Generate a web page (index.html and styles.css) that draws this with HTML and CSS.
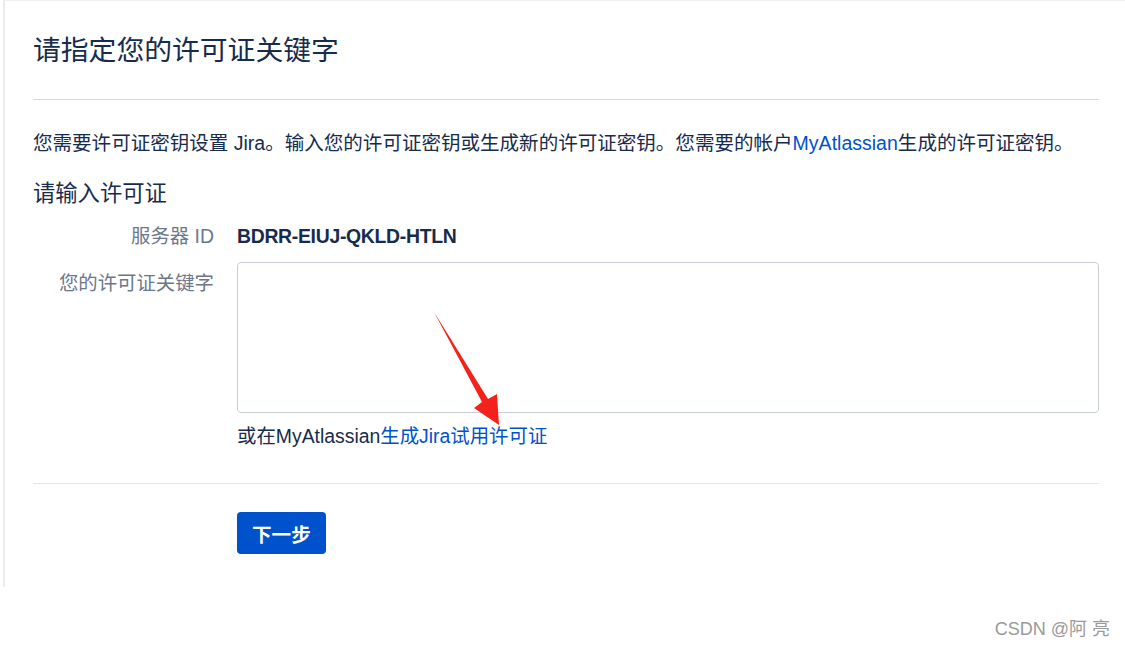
FILE: index.html
```html
<!DOCTYPE html>
<html lang="zh-CN">

<head>
    <meta charset="UTF-8">
    <title>请指定您的许可证关键字</title>
    <link rel="stylesheet" href="styles.css">
</head>

<body>
    <div class="panel">
        <div class="panel-header">
            <h1>请指定您的许可证关键字</h1>
        </div>

        <p class="intro">您需要许可证密钥设置 Jira。输入您的许可证密钥或生成新的许可证密钥。您需要的帐户<a href="#">MyAtlassian</a>生成的许可证密钥。</p>

        <h2>请输入许可证</h2>

        <div class="form-row">
            <label class="label">服务器 ID</label>
            <div class="server-id">BDRR-EIUJ-QKLD-HTLN</div>
        </div>
        <div class="form-row key-row">
            <label class="label" for="licenseKey">您的许可证关键字</label>
            <div class="field">
                <textarea id="licenseKey"></textarea>
                <div class="hint">或在MyAtlassian<a href="#">生成Jira试用许可证</a></div>
            </div>
        </div>

        <div class="panel-footer">
            <button class="btn-primary">下一步</button>
        </div>

        <!-- 标注箭头 -->
        <svg class="arrow" width="1125" height="648" viewBox="0 0 1125 648">
            <polygon points="434,312 488,399 497,394 499,425 474,408 482,402" fill="#f5221b"/>
        </svg>
    </div>

    <div class="watermark">CSDN @阿 亮</div>
</body>

</html>
```

FILE: styles.css
```css
* {
    box-sizing: border-box;
}

body {
    margin: 0;
    background-color: #fff;
    font-family: "Liberation Sans", "Noto Sans CJK SC", sans-serif;
    color: #172b4d;
}

.panel {
    position: relative;
    margin-left: 3px;
    height: 587px;
    border-left: 2px solid #ebecf0;
    border-top: 1px solid #f0f1f3;
    padding: 0 26px 0 28px;
}

.panel-header {
    padding: 30px 0 28px;
    border-bottom: 1px solid #d7dae0;
}

h1 {
    margin: 0;
    font-size: 27.8px;
    font-weight: 400;
    line-height: 40px;
}

.intro {
    margin: 29px 0 0;
    font-size: 19.55px;
    line-height: 28px;
    white-space: nowrap;
}

a {
    color: #0052cc;
    text-decoration: none;
}

h2 {
    margin: 22px 0 0;
    font-size: 22.3px;
    font-weight: 400;
    line-height: 30px;
}

.form-row {
    display: grid;
    grid-template-columns: 181px 1fr;
    column-gap: 23px;
    margin-top: 13px;
    font-size: 19.4px;
    line-height: 28px;
}

.key-row {
    margin-top: 12px;
}

.label {
    text-align: right;
    color: #6b778c;
}

.key-row .label {
    padding-top: 7px;
}

.server-id {
    font-weight: 700;
    letter-spacing: -0.3px;
}

textarea {
    display: block;
    width: 100%;
    height: 151px;
    margin: 0;
    border: 1.5px solid #c9ced6;
    border-radius: 4px;
    resize: none;
    font: inherit;
}

.hint {
    margin-top: 9px;
    white-space: nowrap;
}

.panel-footer {
    margin-top: 33px;
    padding: 28px 0 0 204px;
    border-top: 1px solid #e1e3e8;
}

.btn-primary {
    height: 42px;
    padding: 0 15px;
    border: none;
    border-radius: 4px;
    background-color: #0052cc;
    color: #fff;
    font-family: "Liberation Sans", "Noto Sans CJK SC", sans-serif;
    font-size: 19.6px;
    font-weight: 700;
    cursor: pointer;
}

.arrow {
    position: absolute;
    top: -1px;
    left: -5px;
    pointer-events: none;
}

.watermark {
    margin-top: 30px;
    padding-right: 15px;
    text-align: right;
    font-size: 18px;
    line-height: 24px;
    color: #9a9a9a;
}
```
